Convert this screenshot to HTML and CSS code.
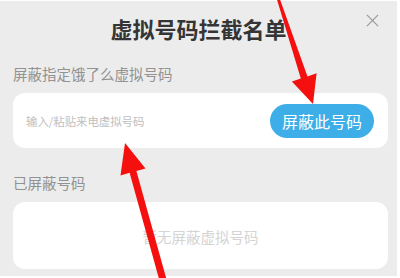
FILE: index.html
```html
<!DOCTYPE html>
<html lang="zh">
<head>
<meta charset="utf-8">
<link rel="stylesheet" href="styles.css">
</head>
<body>
<div class="screen">
  <div class="header">
    <h1 class="title">虚拟号码拦截名单</h1>
    <svg class="close" viewBox="0 0 14 14" width="14" height="14"><path d="M1 1 L13 13 M13 1 L1 13" stroke="#9a9a9a" stroke-width="1.3" fill="none"/></svg>
  </div>
  <div class="label first">屏蔽指定饿了么虚拟号码</div>
  <div class="card input-card">
    <span class="placeholder">输入/粘贴来电虚拟号码</span>
    <span class="btn">屏蔽此号码</span>
  </div>
  <div class="label second">已屏蔽号码</div>
  <div class="card list-card">
    <span class="empty">暂无屏蔽虚拟号码</span>
  </div>
</div>
<svg class="arrows" width="400" height="278" viewBox="0 0 400 278">
  <polygon fill="#f4100f" points="276.5,-2 279.5,-2 307.5,76.4 316.6,73.3 313,104 291.9,81.5 300.8,78.4"/>
  <polygon fill="#f4100f" points="159.6,281 166.4,279 136.4,171 145.5,168.4 125,143 120.5,175.4 129.6,172.8"/>
</svg>
</body>
</html>
```
FILE: styles.css
```css
html, body {
  margin: 0;
  padding: 0;
  background: #ffffff;
}
body {
  width: 400px;
  height: 278px;
  overflow: hidden;
  position: relative;
  font-family: "Noto Sans CJK SC", "Noto Sans", sans-serif;
}
.screen {
  margin-top: 1px;
  width: 397px;
  height: 275px;
  background: #ececec;
  box-sizing: border-box;
  padding: 0 9px 0 13px;
  display: flex;
  flex-direction: column;
}
.header {
  height: 50px;
  display: flex;
  align-items: center;
  justify-content: center;
  position: relative;
  margin-left: -13px;
  margin-right: -9px;
}
.title {
  margin: 4px 0 0 0;
  font-size: 22px;
  font-weight: bold;
  color: #353535;
}
.close {
  position: absolute;
  right: 18px;
  top: 13px;
  width: 13px;
  height: 13px;
}
.label {
  font-size: 14.5px;
  line-height: 20px;
  color: #929292;
}
.label.first {
  margin-top: 13px;
}
.label.second {
  margin-top: 25px;
}
.card {
  background: #ffffff;
  border-radius: 12px;
  margin-top: 9px;
}
.input-card {
  height: 55px;
  display: flex;
  align-items: center;
  justify-content: space-between;
  padding: 0 14px 0 13px;
}
.placeholder {
  font-size: 11.4px;
  color: #c0c0c0;
}
.btn {
  width: 104px;
  height: 34px;
  border-radius: 17px;
  background: #3daee7;
  color: #ffffff;
  font-size: 16px;
  display: flex;
  align-items: center;
  justify-content: center;
}
.list-card {
  height: 67px;
  display: flex;
  align-items: center;
  justify-content: center;
}
.empty {
  font-size: 14.5px;
  color: #d4d4d4;
  margin-top: 2px;
}
.arrows {
  position: absolute;
  left: 0;
  top: 0;
}
```
